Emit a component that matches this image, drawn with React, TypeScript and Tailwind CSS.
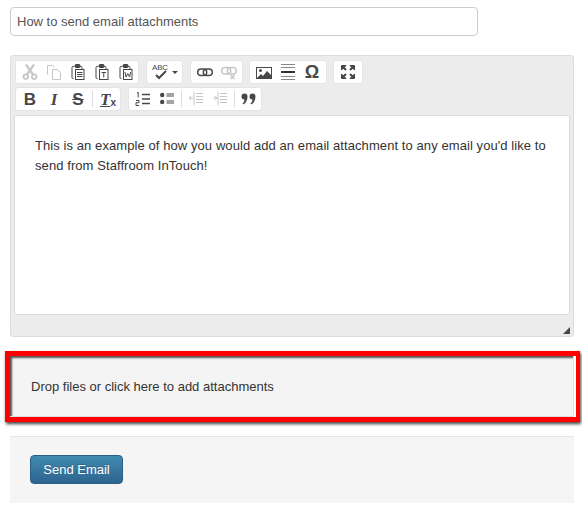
import type { ReactNode } from 'react';

const font = { fontFamily: '"Liberation Sans", Arial, sans-serif' };
const serif = { fontFamily: '"Liberation Serif", serif' };

function Ico({ children, off }: { children: ReactNode; off?: boolean }) {
  return (
    <svg
      width="16"
      height="16"
      viewBox="0 0 16 16"
      fill="none"
      stroke="#474747"
      strokeWidth="1"
      className={off ? 'shrink-0 opacity-30' : 'shrink-0'}
    >
      {children}
    </svg>
  );
}

function Clipboard({ children }: { children: ReactNode }) {
  return (
    <Ico>
      <path d="M3.5 14.5 h-0.5 q-1 0 -1 -1 v-10 q0 -1 1 -1 h1 M10 2.5 h1 q1 0 1 1 v1.5" />
      <rect x="5" y="0.5" width="5" height="3" rx="1" fill="#474747" />
      <rect x="5.5" y="5.5" width="8.5" height="10" fill="#fff" />
      {children}
    </Ico>
  );
}

function Group({ children, className = '' }: { children: ReactNode; className?: string }) {
  return (
    <div className={`flex h-6 items-center gap-2 rounded-[3px] border border-[#e4e4e4] bg-white pl-[6px] ${className}`}>
      {children}
    </div>
  );
}

function Sep() {
  return <div className="-mx-[2px] h-[16px] w-px shrink-0 bg-[#dcdcdc]" />;
}

function Glyph({ children, className = '' }: { children: ReactNode; className?: string }) {
  return <span className={`w-4 shrink-0 text-center leading-none text-[#474747] ${className}`}>{children}</span>;
}

export default function App() {
  return (
    <div className="h-[511px] w-[582px] overflow-hidden bg-white text-[#333]" style={font}>
      <div className="pl-[10px] pt-[7px]">
        {/* Subject */}
        <input
          readOnly
          value="How to send email attachments"
          className="block h-[29px] w-[468px] rounded-[4px] border border-[#ccc] bg-white px-[6px] pb-px text-[13px] text-[#555] outline-none"
          style={font}
        />

        {/* Editor */}
        <div className="mt-[19px] w-[564px] rounded-[3px] border border-[#dcdcdc] bg-[#ececec] px-[3px] pt-[4px]">
          <div className="flex gap-[6px] pl-px">
            <Group className="w-[124px]">
              <Ico off>
                <path d="M4 0.5 L11 10.5 M12 0.5 L5 10.5" strokeWidth="2.2" />
                <circle cx="3.8" cy="12.7" r="2.3" strokeWidth="1.7" />
                <circle cx="12.2" cy="12.7" r="2.3" strokeWidth="1.7" />
              </Ico>
              <Ico off>
                <path d="M1.5 10.5 v-9 h5 l2 2 M6.5 5.5 h5 l3 3 v7 h-8 z" />
              </Ico>
              <Clipboard>
                <path d="M7 8.5 h5.5 M7 10.5 h5.5 M7 12.5 h5.5" />
              </Clipboard>
              <Clipboard>
                <path d="M7.5 8.5 h4.5 M9.75 8.5 v5" />
              </Clipboard>
              <Clipboard>
                <path d="M7 8 l1 5 l1.8 -3.5 l1.8 3.5 l1 -5" />
              </Clipboard>
            </Group>
            <Group className="ml-px w-[37px] !gap-[1px] !pl-[5px]">
              <div className="relative h-4 w-[19px] shrink-0">
                <span className="absolute left-0 top-0 text-[8px] leading-[8px] tracking-[-0.2px] text-[#474747]">ABC</span>
                <svg width="19" height="16" viewBox="0 0 19 16" fill="none" stroke="#474747" className="absolute left-0 top-0">
                  <path d="M4 11 l3 3 l7 -7" strokeWidth="2" />
                </svg>
              </div>
              <div className="h-0 w-0 border-x-[3px] border-t-[3px] border-x-transparent border-t-[#474747]" />
            </Group>
            <Group className="ml-px w-[53px]">
              <Ico>
                <rect x="0.7" y="5" width="9" height="6.5" rx="3.25" strokeWidth="1.5" />
                <rect x="6.3" y="5" width="9" height="6.5" rx="3.25" strokeWidth="1.5" />
              </Ico>
              <Ico off>
                <rect x="0.7" y="3.5" width="9" height="6.5" rx="3.25" strokeWidth="1.5" />
                <rect x="6.3" y="3.5" width="9" height="6.5" rx="3.25" strokeWidth="1.5" />
                <path d="M9.5 11 l4 4 M13.5 11 l-4 4" strokeWidth="1.5" />
              </Ico>
            </Group>
            <Group className="w-[78px]">
              <Ico>
                <rect x="0.5" y="3.5" width="15" height="11" />
                <circle cx="4.5" cy="6.5" r="1.5" fill="#474747" stroke="none" />
                <path d="M1 14 l4 -4 l2 2 l4 -5 l4 4 v3 z" fill="#474747" stroke="none" />
              </Ico>
              <Ico>
                <path d="M1 0.5 h14 M1 3.5 h14 M1 12.5 h14 M1 15.5 h14" stroke="#888" />
                <path d="M1 8 h14" strokeWidth="2" stroke="#333" />
              </Ico>
              <Glyph className="text-[18px] font-bold">Ω</Glyph>
            </Group>
            <Group className="w-[30px]">
              <Ico>
                <path d="M1.5 1.5 h4.5 l-4.5 4.5 z M14.5 1.5 h-4.5 l4.5 4.5 z M1.5 14.5 h4.5 l-4.5 -4.5 z M14.5 14.5 h-4.5 l4.5 -4.5 z" fill="#474747" />
                <path d="M3 3 l3 3 M13 3 l-3 3 M3 13 l3 -3 M13 13 l-3 -3" strokeWidth="2" />
              </Ico>
            </Group>
          </div>

          <div className="mt-[3px] flex gap-[7px] pl-px">
            <Group className="w-[106px]">
              <Glyph className="text-[17px] font-bold">B</Glyph>
              <Glyph className="text-[17px] font-bold italic">
                <span style={serif}>I</span>
              </Glyph>
              <Glyph className="text-[17px] font-bold line-through">S</Glyph>
              <Sep />
              <span className="flex w-4 shrink-0 items-end pl-px text-[17px] font-bold italic leading-none text-[#474747]" style={serif}>
                <span className="underline">T</span>
                <span className="text-[10px] not-italic" style={font}>x</span>
              </span>
            </Group>
            <Group className="w-[134px]">
              <Ico>
                <path d="M7 3.5 h8 M7 8 h8 M7 12.5 h8" strokeWidth="1.4" />
                <path d="M2 2 l1.2 -0.7 v5.2 M1 9.5 h3 v2.2 h-3 v2.8 h3" />
              </Ico>
              <Ico>
                <circle cx="3.2" cy="4" r="2.2" fill="#474747" stroke="none" />
                <circle cx="3.2" cy="11" r="2.2" fill="#474747" stroke="none" />
                <path d="M7.5 3 h7.5 M7.5 5 h7.5 M7.5 10 h7.5 M7.5 12 h7.5" />
              </Ico>
              <Sep />
              <Ico off>
                <path d="M8 2.5 h7 M8 5.5 h7 M8 8.5 h7 M8 11.5 h7 M6 1 v13 M1 7 h4 M3 5 l-2 2 l2 2" />
              </Ico>
              <Ico off>
                <path d="M8 2.5 h7 M8 5.5 h7 M8 8.5 h7 M8 11.5 h7 M6 1 v13 M1 7 h4 M3 5 l2 2 l-2 2" />
              </Ico>
              <Sep />
              <Ico>
                <path d="M3.5 2.5 a3 3 0 0 1 3 3 q0 5 -4 8 l-1 -1 q2 -2 2 -4 a3 3 0 0 1 0 -6 z M11.5 2.5 a3 3 0 0 1 3 3 q0 5 -4 8 l-1 -1 q2 -2 2 -4 a3 3 0 0 1 0 -6 z" fill="#474747" stroke="none" />
              </Ico>
            </Group>
          </div>

          <div className="mt-[4px] h-[200px] rounded-[2px] border border-[#dcdcdc] bg-white px-5 py-[20px] text-[13px] leading-[20px] tracking-[0.08px]">
            <p>
              This is an example of how you would add an email attachment to any email you'd like to send from Staffroom InTouch!
            </p>
          </div>

          <div className="flex h-[21px] items-end justify-end pb-[2px]">
            <svg width="7" height="7" viewBox="0 0 7 7" fill="#474747">
              <path d="M7 0 V7 H0 z" />
            </svg>
          </div>
        </div>
      </div>

      {/* Attachments, boxed in red */}
      <div className="ml-[5px] mt-[14px] h-[71px] w-[575px] border-y-[5px] border-l-[5px] border-r-[4px] border-[#ff0000] bg-white pr-[2px] shadow-[1px_2px_3px_rgba(0,0,0,0.75)]">
        <div className="flex h-full items-center border-b border-r border-[#ddd] bg-[#f4f4f4] pl-[21px] pt-px text-[13px] shadow-[inset_2px_2px_2px_rgba(0,0,0,0.65)]">
          Drop files or click here to add attachments
        </div>
      </div>

      {/* Footer */}
      <div className="ml-[10px] mt-[14px] h-[67px] w-[564px] border-t border-[#e5e5e5] bg-[#f5f5f5] pl-5 pt-[18px]">
        <button
          className="h-[29px] w-[93px] rounded-[4px] border border-[#2b5f85] bg-gradient-to-b from-[#428bb0] to-[#2d6490] text-[13px] text-white"
          style={{ ...font, textShadow: '0 -1px 0 rgba(0,0,0,0.2)' }}
        >
          Send Email
        </button>
      </div>
    </div>
  );
}
